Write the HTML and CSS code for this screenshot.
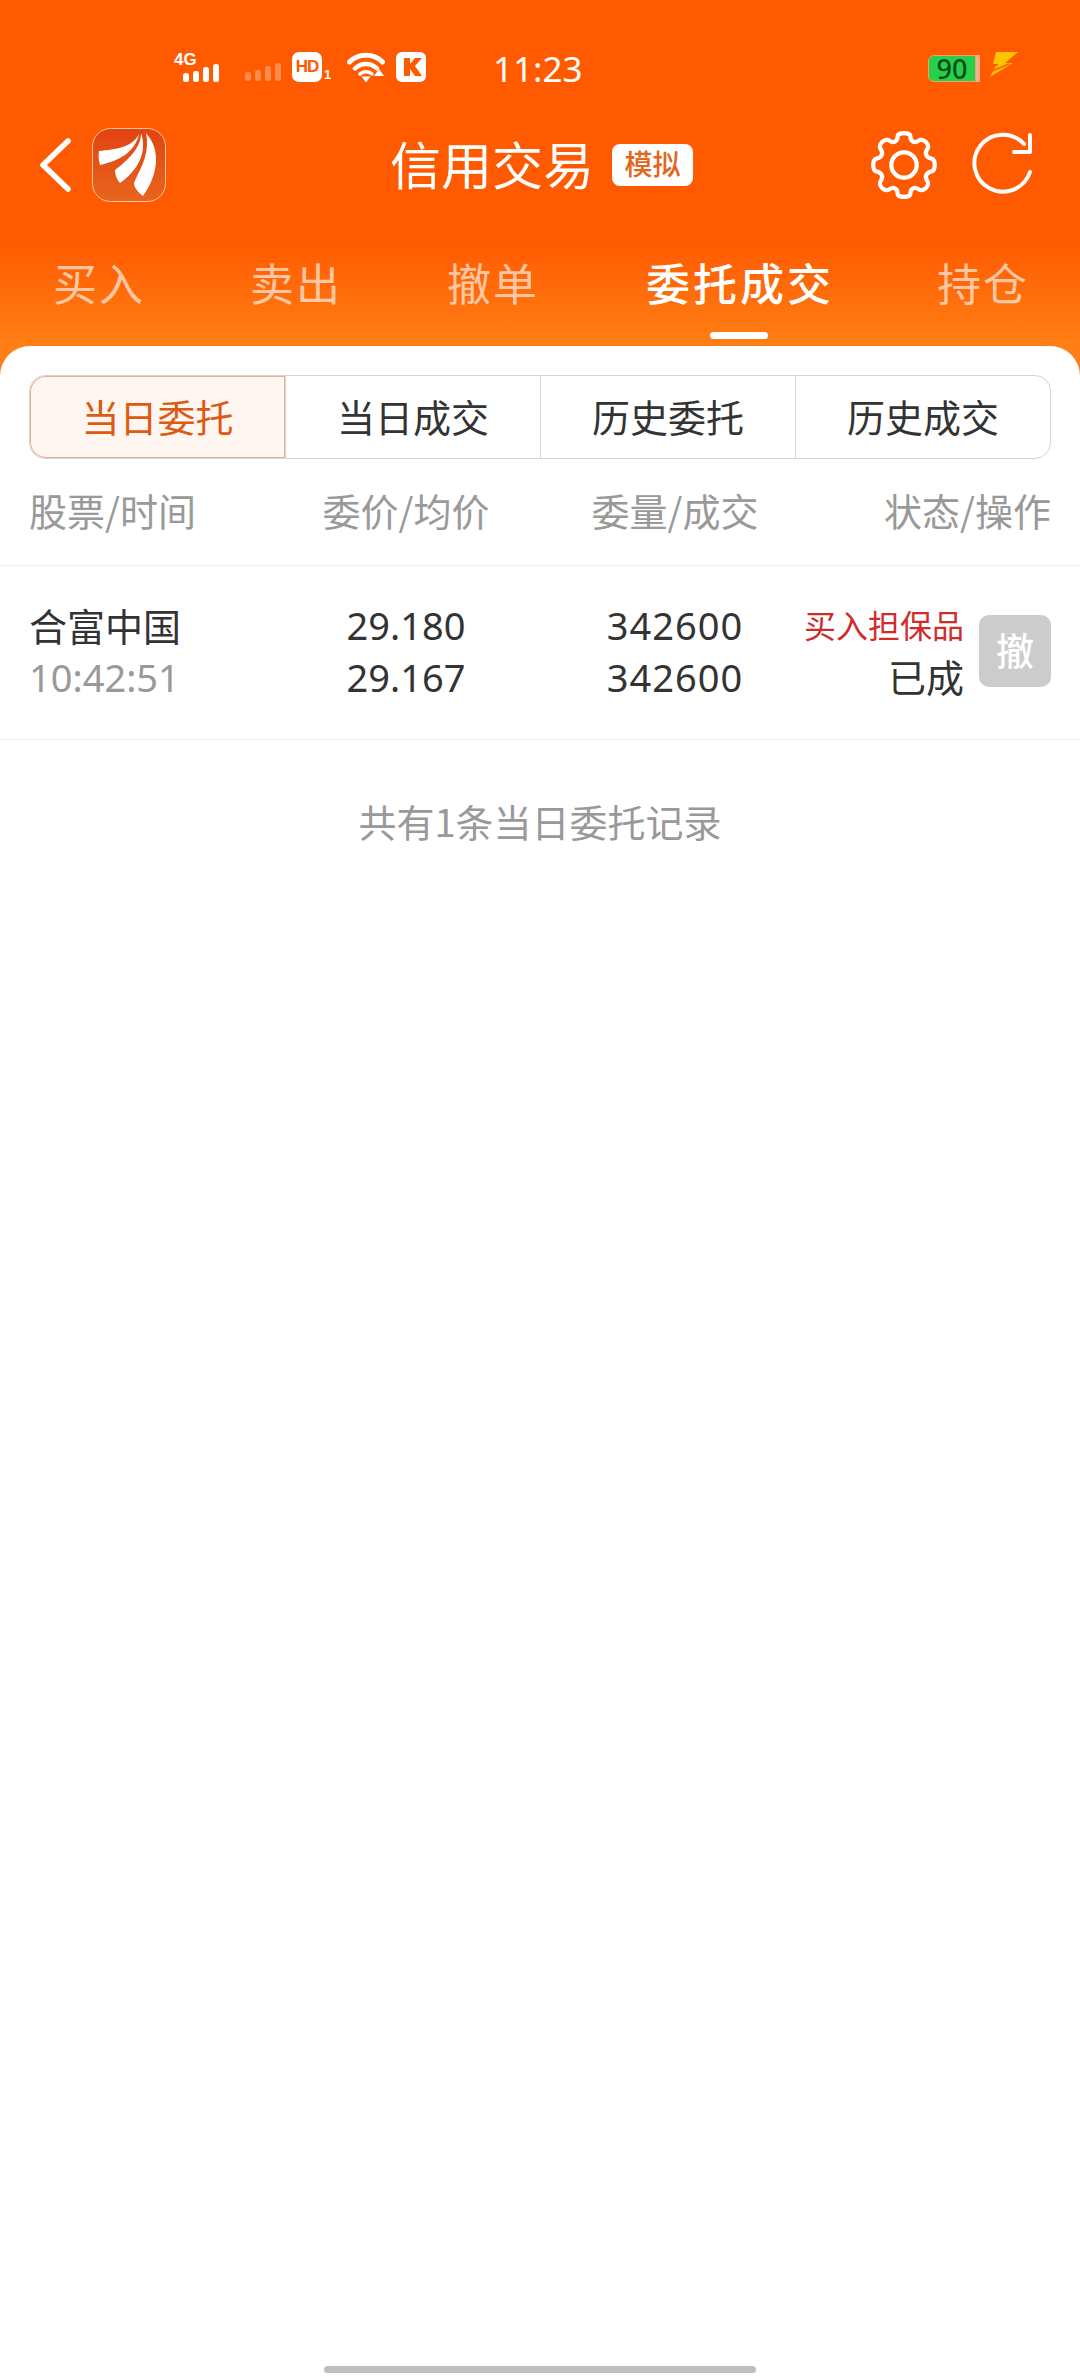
FILE: index.html
```html
<!DOCTYPE html>
<html lang="zh-CN">

<head>
  <meta charset="UTF-8" />
  <meta name="viewport" content="width=device-width, initial-scale=1" />
  <title>信用交易</title>
  <link rel="stylesheet" href="styles.css">
</head>

<body>
  <header class="top">
    <div class="status">
      <svg class="ic-net" width="58" height="34" viewBox="0 0 58 34">
        <text x="0" y="15" class="ic-4g">4G</text>
        <rect x="9" y="23" width="6" height="9" rx="2.5" fill="#fff" />
        <rect x="19" y="21" width="6" height="11" rx="2.5" fill="#fff" />
        <rect x="29" y="17" width="6" height="15" rx="2.5" fill="#fff" />
        <rect x="39" y="14" width="6" height="18" rx="2.5" fill="#fff" />
      </svg>
      <svg class="ic-sig2" width="36" height="20" viewBox="0 0 36 20" opacity="0.3">
        <rect x="0" y="10" width="6" height="9" rx="2.5" fill="#fff" />
        <rect x="10" y="8" width="6" height="11" rx="2.5" fill="#fff" />
        <rect x="20" y="4" width="6" height="15" rx="2.5" fill="#fff" />
        <rect x="30" y="1" width="6" height="18" rx="2.5" fill="#fff" />
      </svg>
      <span class="ic-hd">HD</span><span class="ic-hd-sub">1</span>
      <svg class="ic-wifi" width="38" height="32" viewBox="0 0 38 32">
        <path d="M2.500 11C11 2 27 2 35.500 11" fill="none" stroke="#fff" stroke-width="5" stroke-linecap="round" />
        <path d="M8 17.500C14 11.500 24 11.500 30 17.500" fill="none" stroke="#fff" stroke-width="4.500" stroke-linecap="round" />
        <path d="M13 23C16 20 22 20 25 23" fill="none" stroke="#fff" stroke-width="3.500" stroke-linecap="round" />
        <path d="M14.500 25.500H23.500L19 31.500Z" fill="#fff" />
        <path d="M32 18L37 25H27Z" fill="#fff" />
      </svg>
      <svg class="ic-k" width="30" height="30" viewBox="0 0 30 30">
        <rect width="30" height="30" rx="6" fill="#fff" />
        <path d="M8 6H14V12L19 6H26L19 14L26 24H19L14 17V24H8Z" fill="#ff5a00" />
      </svg>
      <span class="clock">11:23</span>
      <span class="battery"><span class="battery-fill">90</span><span class="battery-cap"></span></span>
      <svg class="ic-bolt" width="30" height="26" viewBox="0 0 30 26">
        <path d="M6 0H28L15 11H23L0 25L5 15L9 12H3Z" fill="#ffc400" />
        <path d="M2 19L19 12" stroke="#ff5a00" stroke-width="1.500" />
      </svg>
    </div>

    <div class="nav">
      <svg class="ic-back" width="34" height="56" viewBox="0 0 34 56">
        <path d="M30 4L5 28L30 52" fill="none" stroke="#fff" stroke-width="5.500" stroke-linecap="round" stroke-linejoin="round" />
      </svg>
      <svg class="logo" width="74" height="74" viewBox="0 0 74 74">
        <defs>
          <linearGradient id="logoBg" x1="0" y1="0" x2="0" y2="1">
            <stop offset="0" stop-color="#e34312" />
            <stop offset="1" stop-color="#e8651c" />
          </linearGradient>
        </defs>
        <rect x="0.500" y="0.500" width="73" height="73" rx="18" fill="url(#logoBg)" stroke="#f8c9a0" />
        <path d="M47 6C40 20 24 21 7 23C6 28 7 33 8 37C26 33 43 25 47 6Z" fill="#fff" />
        <path d="M49 5C49 20 36 32 23 42C23 47 25 52 28 55C45 43 56 25 49 5Z" fill="#fff" />
        <path d="M54 5C58 26 49 39 42 55C42 60 47 65 51 68C64 50 71 24 54 5Z" fill="#fff" />
      </svg>
      <div class="nav-title">
        <span class="title">信用交易</span>
        <span class="tag">模拟</span>
      </div>
      <svg class="ic-gear" width="70" height="70" viewBox="0 0 66 66">
        <path d="M27 6C27 2 39 2 39 6C39 11 43 13 47 10C51 7 58 14 55 18C52 22 54 26 59 27C63 28 63 38 59 39C54 40 52 44 55 48C58 52 51 59 47 56C43 53 39 55 39 60C39 64 27 64 27 60C27 55 23 53 19 56C15 59 8 52 11 48C14 44 12 40 7 39C3 38 3 28 7 27C12 26 14 22 11 18C8 14 15 7 19 10C23 13 27 11 27 6Z" fill="none" stroke="#fff" stroke-width="4" stroke-linejoin="round" />
        <circle cx="33" cy="33" r="12" fill="none" stroke="#fff" stroke-width="4" />
      </svg>
      <svg class="ic-refresh" width="64" height="66" viewBox="0 0 64 66">
        <path d="M58 40A28.500 28.500 0 1 1 52 12" fill="none" stroke="#fff" stroke-width="4" stroke-linecap="round" />
        <path d="M58 3V20H42" fill="none" stroke="#fff" stroke-width="4" stroke-linecap="round" stroke-linejoin="round" />
      </svg>
    </div>

    <nav class="tabs">
      <span class="tab">买入</span>
      <span class="tab">卖出</span>
      <span class="tab">撤单</span>
      <span class="tab tab-on">委托成交</span>
      <span class="tab">持仓</span>
    </nav>
  </header>

  <main class="panel">
    <div class="seg">
      <div class="seg-item seg-on">当日委托</div>
      <div class="seg-item">当日成交</div>
      <div class="seg-item">历史委托</div>
      <div class="seg-item">历史成交</div>
    </div>

    <div class="cols head">
      <span>股票/时间</span>
      <span class="mid">委价/均价</span>
      <span class="mid">委量/成交</span>
      <span class="end">状态/操作</span>
    </div>

    <div class="cols row">
      <div>
        <div class="name">合富中国</div>
        <div class="time">10:42:51</div>
      </div>
      <div class="mid">
        <div>29.180</div>
        <div>29.167</div>
      </div>
      <div class="mid qty">
        <div>342600</div>
        <div>342600</div>
      </div>
      <div class="state">
        <div class="state-text">
          <div class="kind">买入担保品</div>
          <div>已成</div>
        </div>
        <div class="cancel">撤</div>
      </div>
    </div>

    <p class="note">共有1条当日委托记录</p>
  </main>

  <div class="home-bar"></div>
</body>

</html>
```

FILE: styles.css
```css
* {
  box-sizing: border-box;
}

body {
  margin: 0;
  height: 2376px;
  display: flex;
  flex-direction: column;
  font-family: "Noto Sans CJK SC", "Noto Sans", sans-serif;
  background-color: #fff;
  color: #333;
  overflow: hidden;
  position: relative;
}

.top {
  height: 376px;
  flex: none;
  background: linear-gradient(#ff5a00 0, #ff5a00 240px, #ff7f16 346px);
  color: #fff;
}

.status {
  height: 130px;
  padding: 50px 60px 0 174px;
  display: flex;
  align-items: flex-start;
}

.ic-4g {
  font-family: "Liberation Sans", sans-serif;
  font-size: 17px;
  font-weight: bold;
  fill: #fff;
}

.ic-sig2 {
  margin: 12px 0 0 13px;
}

.ic-hd {
  margin: 2px 0 0 11px;
  width: 30px;
  height: 30px;
  background-color: #fff;
  border-radius: 7px;
  color: #ff5a00;
  font-family: "Liberation Sans", sans-serif;
  font-size: 17px;
  font-weight: bold;
  line-height: 30px;
  text-align: center;
  letter-spacing: -1px;
  overflow: hidden;
}

.ic-hd-sub {
  width: 8px;
  margin: 18px 0 0 2px;
  font-family: "Liberation Sans", sans-serif;
  font-size: 13px;
  line-height: 14px;
  font-weight: bold;
}

.ic-wifi {
  margin: 1px 0 0 15px;
}

.ic-k {
  margin: 2px 0 0 11px;
}

.clock {
  margin: -4px 0 0 67px;
  font-family: "Noto Sans", sans-serif;
  font-size: 35px;
  line-height: 46px;
}

.battery {
  margin: 5px 0 0 auto;
  display: flex;
  align-items: center;
  height: 27px;
}

.battery-fill {
  width: 48px;
  height: 27px;
  background-color: #26d04a;
  border: 1px solid #f0a070;
  border-radius: 6px 0 0 6px;
  color: #064d18;
  font-family: "Noto Sans", sans-serif;
  font-size: 27px;
  font-weight: 500;
  line-height: 25px;
  text-align: center;
}

.battery-cap {
  width: 7px;
  height: 27px;
  background: linear-gradient(90deg, #f5b08a 0, #f5b08a 4px, transparent 4px);
}

.ic-bolt {
  margin: 2px 0 0 7px;
}

.nav {
  height: 70px;
  padding: 0 44px 0 38px;
  display: flex;
  align-items: center;
  position: relative;
}

.logo {
  margin-left: 20px;
}

.nav-title {
  position: absolute;
  left: 390px;
  top: 0;
  height: 70px;
  display: flex;
  align-items: center;
}

.title {
  font-size: 51px;
  line-height: 66px;
  margin-bottom: 4px;
}

.tag {
  margin-left: 18px;
  width: 81px;
  height: 42px;
  background-color: #fff;
  border-radius: 8px;
  color: #e2661c;
  font-size: 28px;
  font-weight: 500;
  line-height: 39px;
  text-align: center;
}

.ic-gear {
  margin-left: auto;
}

.ic-refresh {
  margin-left: 33px;
}

.tabs {
  height: 146px;
  padding-left: 53px;
  display: grid;
  grid-template-columns: 197px 197px 199px 291px auto;
  align-items: start;
  font-size: 44px;
  line-height: 60px;
  color: rgba(255, 255, 255, 0.65);
}

.tab {
  margin-top: 52px;
  white-space: nowrap;
  letter-spacing: 2px;
}

.tab-on {
  color: #fff;
  font-weight: 500;
  letter-spacing: 3px;
}

.tab-on::after {
  content: "";
  display: block;
  width: 58px;
  height: 7px;
  margin: 20px 0 0 64px;
  background-color: #fff;
  border-radius: 4px;
}

.panel {
  flex: 1;
  margin-top: -30px;
  background-color: #fff;
  border-radius: 30px 30px 0 0;
  position: relative;
}

.seg {
  margin: 29px 29px 0;
  height: 84px;
  display: grid;
  grid-template-columns: repeat(4, 1fr);
  border: 1px solid #d4d4d4;
  border-radius: 16px;
  overflow: hidden;
}

.seg-item {
  font-size: 38px;
  line-height: 79px;
  text-align: center;
  border-left: 1px solid #d4d4d4;
}

.seg-item:first-child {
  border-left: 0;
}

.seg-on {
  background-color: #fff6f1;
  color: #dc5a12;
  box-shadow: inset 0 0 0 1px #e8b090;
  border-radius: 16px 0 0 16px;
}

.cols {
  display: grid;
  grid-template-columns: 237px 280px 258px 1fr;
  padding: 0 29px;
}

.head {
  height: 107px;
  align-items: center;
  padding-bottom: 5px;
  font-size: 38px;
  color: #999;
  border-bottom: 1px solid #eee;
}

.mid {
  text-align: center;
}

.end {
  text-align: right;
}

.row {
  height: 174px;
  align-items: center;
  padding-bottom: 3px;
  font-family: "Noto Sans", "Noto Sans CJK SC", sans-serif;
  font-size: 38px;
  line-height: 52px;
  border-bottom: 1px solid #eee;
}

.qty {
  letter-spacing: 1px;
}

.name {
  font-family: "Noto Sans CJK SC", sans-serif;
}

.time {
  color: #999;
}

.state {
  display: flex;
  justify-content: flex-end;
  align-items: center;
  gap: 15px;
}

.state-text {
  margin-top: -3px;
  text-align: right;
  font-family: "Noto Sans CJK SC", sans-serif;
}

.kind {
  color: #cf2c2c;
  font-size: 32px;
}

.cancel {
  width: 72px;
  height: 72px;
  background-color: #ccc;
  border-radius: 10px;
  color: #fff;
  font-family: "Noto Sans CJK SC", sans-serif;
  font-size: 38px;
  font-weight: 500;
  line-height: 68px;
  text-align: center;
}

.note {
  margin: 55px 0 0;
  font-size: 38px;
  line-height: 52px;
  text-align: center;
  color: #999;
}

.home-bar {
  position: absolute;
  left: 324px;
  top: 2366px;
  width: 432px;
  height: 7px;
  background-color: #bfbfbf;
  border-radius: 4px;
}
```
